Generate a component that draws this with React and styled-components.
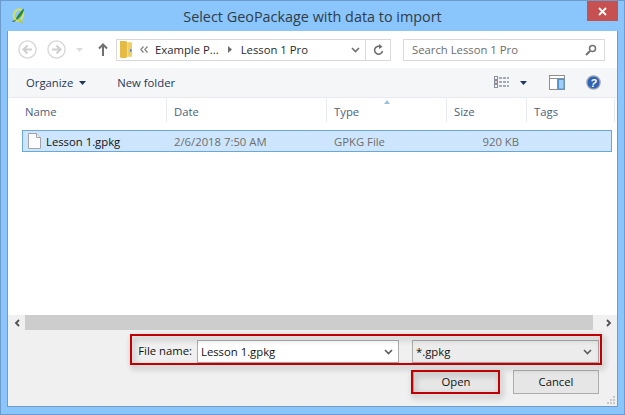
import React from 'react';
import styled, { createGlobalStyle } from 'styled-components';

const Global = createGlobalStyle`
  html, body { margin: 0; padding: 0; background: #fff; }
  * { box-sizing: border-box; }
  #root { width: 625px; height: 415px; overflow: hidden; }
`;
const Win = styled.div`
  position: relative; width: 625px; height: 415px; background: #8ac6fb;
  border: 1px solid #6b9ccb;
  display: flex; flex-direction: column;
  font-family: "Open Sans", "Noto Sans", sans-serif; font-size: 11.3px; color: #1a1a1a;
`;
const TitleBar = styled.div`
  height: 29px; flex: none; position: relative; display: flex; align-items: center; justify-content: center;
`;
const Title = styled.div`
  font-size: 14.4px; color: #303c48; margin-top: 2px;
`;
const AppIcon = styled.svg` position: absolute; left: 11px; top: 6px; `;
const Close = styled.div`
  position: absolute; right: 6px; top: 0; width: 31px; height: 20px; background: #c75050;
  display: flex; align-items: center; justify-content: center;
`;
const Client = styled.div`
  flex: 1; margin: 1px 6px 7px 6px; min-height: 0; display: flex; flex-direction: column; background: #fff;
  border-bottom: 1px solid #6f9cc6; border-left: 1px solid #6f9cc6; border-right: 1px solid #6f9cc6;
`;
const NavBar = styled.div`
  height: 37px; flex: none; display: flex; align-items: center; background: #fff; padding: 0 5px 0 10px;
`;
const CircleBtn = styled.svg` display: block; margin-right: 10px; flex: none; `;
const SmallIcon = styled.svg` display: block; flex: none; `;
const Breadcrumb = styled.div`
  margin-left: 8px; width: 275px; height: 22px; border: 1px solid #d9d9d9; display: flex; align-items: center; flex: none;
`;
const Crumb = styled.span`
  white-space: nowrap; color: #2a2a2a;
`;
const Refresh = styled.div`
  width: 25px; height: 100%; border-left: 1px solid #d9d9d9; display: flex; align-items: center; justify-content: center; flex: none;
`;
const Search = styled.div`
  margin-left: 12px; width: 202px; height: 22px; border: 1px solid #d9d9d9; display: flex; align-items: center; padding: 0 7px 0 8px; color: #6d6d6d; justify-content: space-between; flex: none;
`;
const CmdBar = styled.div`
  height: 30px; flex: none; background: #f5f6f7; display: flex; align-items: center; padding: 0 0 0 18px; border-bottom: 1px solid #e7e9ec;
`;
const CmdLabel = styled.span`
  color: #1e395b; margin-right: ${p => p.$mr || 0}px;
`;
const CmdRight = styled.div`
  margin-left: auto; display: flex; align-items: center; padding-right: 16px;
`;
const Header = styled.div`
  height: 24px; flex: none; display: flex; align-items: stretch; background: #fff; position: relative;
`;
const HeaderCell = styled.div`
  width: ${p => p.$w}px; flex: none; padding: 2px 0 0 ${p => p.$pl || 7}px; color: #4c607a; display: flex; align-items: center;
  border-right: 1px solid #e8ecf1;
`;
const SortArrow = styled.div`
  position: absolute; left: 376px; top: 2px; width: 0; height: 0;
  border-left: 3.5px solid transparent; border-right: 3.5px solid transparent; border-bottom: 4px solid #9fc0dc;
`;
const List = styled.div` flex: 1; background: #fff; min-height: 0; padding: 8px 5px 0 14px; `;
const Row = styled.div`
  height: 22px; background: #cde6fd; border: 1px solid #6aa7dd; display: flex; align-items: center;
`;
const NameCol = styled.div`
  width: 151px; flex: none; padding-left: 5px; display: flex; align-items: center; gap: 5px; color: #111;
`;
const Cell = styled.div`
  width: ${p => p.$w}px; flex: none; color: #6d6d6d; text-align: ${p => p.$right ? 'right' : 'left'};
`;
const ScrollBar = styled.div`
  height: 15px; flex: none; display: flex; align-items: center; background: #f0f0f0; justify-content: space-between;
`;
const Arrow = styled.div` width: ${p => p.$w}px; display: flex; justify-content: center; flex: none; padding-left: ${p => p.$pl || 0}px; `;
const Thumb = styled.div` flex: 1; height: 15px; background: #cdcdcd; `;
const Panel = styled.div`
  height: 76px; flex: none; background: #f0f0f0; display: flex; flex-direction: column; align-items: flex-end; padding: 10px 18px 0 0; position: relative;
`;
const FieldRow = styled.div` display: flex; align-items: center; height: 23px; `;
const Label = styled.span` color: #111; margin-right: 5px; margin-top: -2px; `;
const NameInput = styled.div`
  width: 202px; height: 23px; background: #fff; border: 1px solid #acacac; display: flex; align-items: center; justify-content: space-between; padding: 0 5px 0 3px; margin-right: 13px; color: #111;
`;
const Filter = styled.div`
  width: 187px; height: 23px; background: #ececec; border: 1px solid #acacac; display: flex; align-items: center; justify-content: space-between; padding: 0 6px 0 3px; color: #111;
`;
const Buttons = styled.div` display: flex; gap: 14px; margin-top: 7px; `;
const Btn = styled.div`
  width: 86px; height: 24px; background: #e6e6e6; border: 1px solid #acacac; display: flex; align-items: center; justify-content: center; color: #111; padding-bottom: 1px;
`;
const Grip = styled.svg` position: absolute; right: 1px; bottom: 1px; `;
const RedBox = styled.div`
  position: absolute; border: 2px solid #c00000; pointer-events: none;
  filter: drop-shadow(2px 3px 3px rgba(0,0,0,.35));
`;
const FileBox = styled(RedBox)` left: 129px; top: 333px; width: 472px; height: 31px; `;
const OpenBox = styled(RedBox)` left: 410px; top: 369px; width: 89px; height: 24px; `;

const Chevron = () => (
  <SmallIcon width="9" height="6" viewBox="0 0 9 6"><path d="M1 1l3.500 3.500L8 1" fill="none" stroke="#5b5b5b" strokeWidth="1.600"/></SmallIcon>
);
const NavCircle = ({ dir }) => (
  <CircleBtn width="19" height="19" viewBox="0 0 19 19">
    <circle cx="9.500" cy="9.500" r="8.600" fill="#fff" stroke="#d4d4d4" strokeWidth="1.300"/>
    <path d={dir === 'l' ? 'M14 9.500H6M9.500 5.500L5.500 9.500l4 4' : 'M5 9.500h8M9.500 5.500l4 4-4 4'} fill="none" stroke="#cfcfcf" strokeWidth="2"/>
  </CircleBtn>
);

export default function App() {
  return (
    <Win>
      <Global />
      <TitleBar>
        <AppIcon width="14" height="17" viewBox="0 0 14 17">
          <ellipse cx="6.500" cy="8" rx="4.600" ry="5.800" transform="rotate(18 6.500 8)" fill="none" stroke="#d6e060" strokeWidth="2"/>
          <path d="M3.500 12.500C5 9 8 5 11.500 1.500L12 3c-1 4-3.500 7-6.500 9.500z" fill="#2f8a2c"/>
          <path d="M7 12.500l3.500 3.500" stroke="#b9cc3a" strokeWidth="1.800" fill="none"/>
          <path d="M.5 14.500l3-1" stroke="#2f6d1e" strokeWidth="1.200" fill="none"/>
        </AppIcon>
        <Title>Select GeoPackage with data to import</Title>
        <Close>
          <svg width="9" height="9" viewBox="0 0 9 9"><path d="M1 1l7 7M8 1L1 8" stroke="#fff" strokeWidth="1.800"/></svg>
        </Close>
      </TitleBar>
      <Client>
        <NavBar>
          <NavCircle dir="l" />
          <NavCircle dir="r" />
          <SmallIcon width="7" height="4" viewBox="0 0 7 4" style={{ marginRight: 15 }}><path d="M0 0h7L3.500 4z" fill="#dcdcdc"/></SmallIcon>
          <SmallIcon width="10" height="13" viewBox="0 0 10 13"><path d="M5 13V2M1 5.500L5 1.500l4 4" fill="none" stroke="#707070" strokeWidth="2"/></SmallIcon>
          <Breadcrumb>
            <SmallIcon width="13" height="17" viewBox="0 0 13 17" style={{ marginLeft: 3 }}>
              <path d="M1 1h11v15H1z" fill="#f6dd83"/>
              <path d="M0 0h6l1 1v15l-1 1H1L0 16z" fill="#e6bb45"/>
              <path d="M8 2h4v13H8z" fill="#f0ce67"/>
              <path d="M10 8h1.500v3H10z" fill="#5f8fb8"/>
            </SmallIcon>
            <SmallIcon width="8" height="7" viewBox="0 0 8 7" style={{ marginLeft: 7 }}><path d="M3.500 .5L.8 3.500l2.700 3M7.500 .5L4.800 3.500l2.700 3" fill="none" stroke="#808080" strokeWidth="1.200"/></SmallIcon>
            <Crumb style={{ marginLeft: 7 }}>Example P...</Crumb>
            <SmallIcon width="4" height="7" viewBox="0 0 4 7" style={{ marginLeft: 9, marginRight: 9 }}><path d="M0 0l4 3.500L0 7z" fill="#6d6d6d"/></SmallIcon>
            <Crumb>Lesson 1 Pro</Crumb>
            <SmallIcon width="9" height="6" viewBox="0 0 9 6" style={{ marginLeft: 'auto', marginRight: 5 }}><path d="M1 1l3.500 3.500L8 1" fill="none" stroke="#707070" strokeWidth="1.600"/></SmallIcon>
            <Refresh>
              <svg width="11" height="12" viewBox="0 0 11 12"><path d="M9.500 7a4 4 0 1 1-2-4.300" fill="none" stroke="#6b6b6b" strokeWidth="1.500"/><path d="M6 0l3.500 2.800L6 5z" fill="#6b6b6b"/></svg>
            </Refresh>
          </Breadcrumb>
          <Search>
            <span>Search Lesson 1 Pro</span>
            <svg width="12" height="12" viewBox="0 0 12 12"><circle cx="7.500" cy="4.500" r="3" fill="none" stroke="#707070" strokeWidth="1.500"/><path d="M5 7l-4 4" stroke="#707070" strokeWidth="2"/></svg>
          </Search>
        </NavBar>
        <CmdBar>
          <CmdLabel $mr={6}>Organize</CmdLabel>
          <SmallIcon width="7" height="4" viewBox="0 0 7 4" style={{ marginRight: 31 }}><path d="M0 0h7L3.500 4z" fill="#1e395b"/></SmallIcon>
          <CmdLabel>New folder</CmdLabel>
          <CmdRight>
            <SmallIcon width="15" height="13" viewBox="0 0 15 13" style={{ marginRight: 11 }}>
              <g fill="none" stroke="#8a8f99"><rect x=".5" y=".5" width="3" height="3"/><rect x=".5" y="4.500" width="3" height="3"/><rect x=".5" y="8.500" width="3" height="3"/></g>
              <path d="M1.500 6h1" stroke="#c33"/>
              <path d="M5 2h10M5 6h10M5 10h10" stroke="#50607a" strokeDasharray="3 1"/>
            </SmallIcon>
            <SmallIcon width="7" height="4" viewBox="0 0 7 4" style={{ marginRight: 22 }}><path d="M0 0h7L3.500 4z" fill="#1e395b"/></SmallIcon>
            <SmallIcon width="16" height="15" viewBox="0 0 16 15" style={{ marginRight: 21 }}>
              <rect x=".5" y=".5" width="15" height="14" fill="#fff" stroke="#8f8f8f"/>
              <path d="M1 3.500h14" stroke="#8f8f8f"/>
              <path d="M8.500 4v10" stroke="#8f8f8f"/>
              <rect x="9.500" y="4.500" width="5.500" height="9.500" fill="#9fcdf5" stroke="#4c94d6"/>
            </SmallIcon>
            <SmallIcon width="15" height="15" viewBox="0 0 15 15">
              <circle cx="7.500" cy="7.500" r="6.600" fill="#2f62b3" stroke="#9aa3b2" strokeWidth="1.300"/>
              <text x="7.500" y="11.500" textAnchor="middle" fontSize="11" fontWeight="700" fontStyle="italic" fontFamily="Liberation Sans, sans-serif" fill="#fff">?</text>
            </SmallIcon>
          </CmdRight>
        </CmdBar>
        <Header>
          <HeaderCell $w={159} $pl={17}>Name</HeaderCell>
          <HeaderCell $w={160}>Date</HeaderCell>
          <HeaderCell $w={120}>Type</HeaderCell>
          <HeaderCell $w={80}>Size</HeaderCell>
          <HeaderCell $w={88}>Tags</HeaderCell>
          <SortArrow />
        </Header>
        <List>
          <Row>
            <NameCol>
              <svg width="13" height="16" viewBox="0 0 13 16"><path d="M.5.500h8l4 4v11H.5z" fill="#fbfbfb" stroke="#a4a4a4"/><path d="M8.500.500v4h4" fill="#eee" stroke="#a4a4a4"/></svg>
              <span>Lesson 1.gpkg</span>
            </NameCol>
            <Cell $w={160}>2/6/2018 7:50 AM</Cell>
            <Cell $w={100}>GPKG File</Cell>
            <Cell $w={85} $right>920 KB</Cell>
          </Row>
        </List>
        <ScrollBar>
          <Arrow $w={17}><svg width="6" height="8" viewBox="0 0 6 8"><path d="M5 1L2 4l3 3" fill="none" stroke="#505050" strokeWidth="1.800"/></svg></Arrow>
          <Thumb />
          <Arrow $w={24} $pl={8}><svg width="6" height="8" viewBox="0 0 6 8"><path d="M1 1l3 3-3 3" fill="none" stroke="#505050" strokeWidth="1.800"/></svg></Arrow>
        </ScrollBar>
        <Panel>
          <FieldRow>
            <Label>File name:</Label>
            <NameInput><span>Lesson 1.gpkg</span><Chevron /></NameInput>
            <Filter><span>*.gpkg</span><Chevron /></Filter>
          </FieldRow>
          <Buttons>
            <Btn>Open</Btn>
            <Btn>Cancel</Btn>
          </Buttons>
          <Grip width="9" height="9" viewBox="0 0 9 9"><path d="M6 0h2v2H6zM3 3h2v2H3zM6 3h2v2H6zM0 6h2v2H0zM3 6h2v2H3zM6 6h2v2H6z" fill="#c8c8c8"/></Grip>
        </Panel>
      </Client>
      <FileBox />
      <OpenBox />
    </Win>
  );
}
